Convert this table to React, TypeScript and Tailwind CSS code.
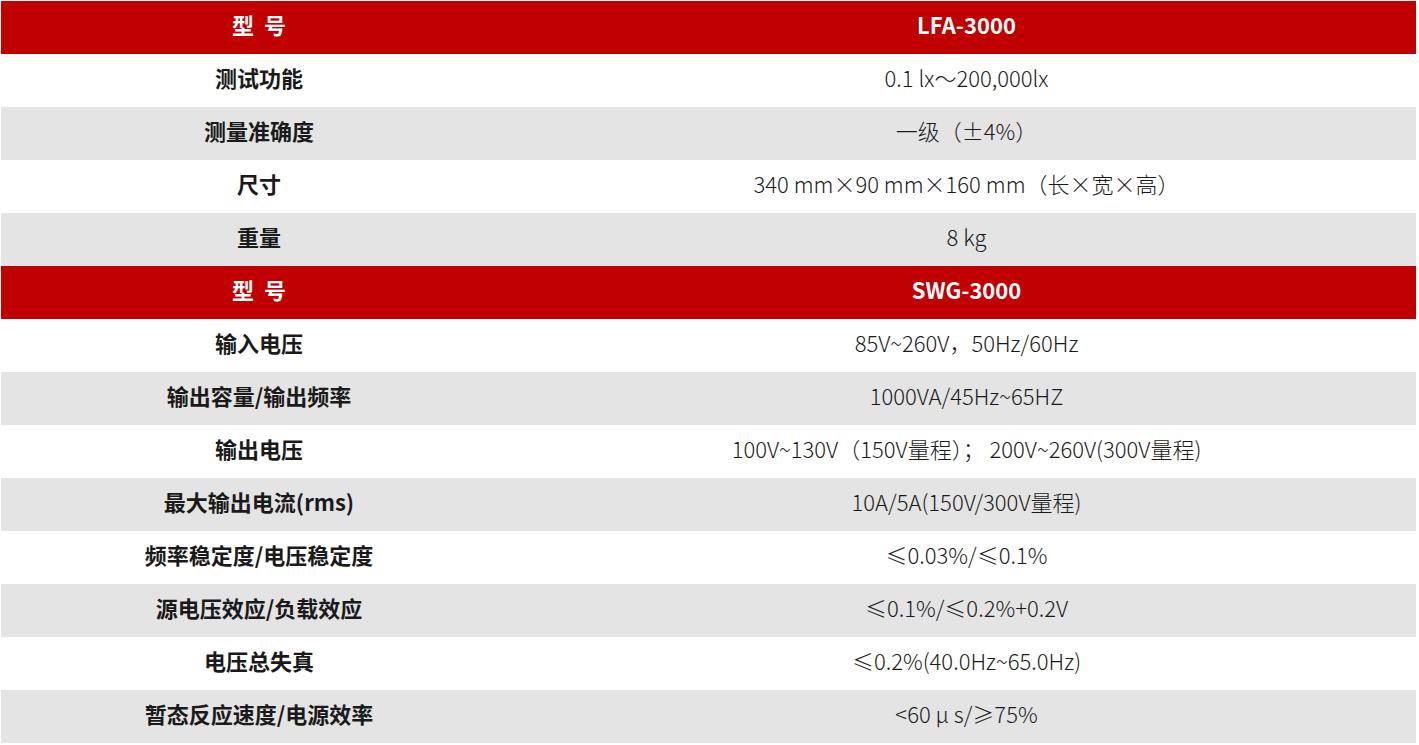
const rows: { label: string; value: string; head?: boolean }[] = [
  { label: '型\u00a0\u00a0号', value: 'LFA-3000', head: true },
  { label: '测试功能', value: '0.1 lx～200,000lx' },
  { label: '测量准确度', value: '一级（±4%）' },
  { label: '尺寸', value: '340 mm×90 mm×160 mm（长×宽×高）' },
  { label: '重量', value: '8 kg' },
  { label: '型\u00a0\u00a0号', value: 'SWG-3000', head: true },
  { label: '输入电压', value: '85V~260V，50Hz/60Hz' },
  { label: '输出容量/输出频率', value: '1000VA/45Hz~65HZ' },
  { label: '输出电压', value: '100V~130V（150V量程）； 200V~260V(300V量程)' },
  { label: '最大输出电流(rms)', value: '10A/5A(150V/300V量程)' },
  { label: '频率稳定度/电压稳定度', value: '≤0.03%/≤0.1%' },
  { label: '源电压效应/负载效应', value: '≤0.1%/≤0.2%+0.2V' },
  { label: '电压总失真', value: '≤0.2%(40.0Hz~65.0Hz)' },
  { label: '暂态反应速度/电源效率', value: '<60 μ s/≥75%' },
]

export default function App() {
  let band = 0
  return (
    <div className="min-h-[745px] bg-white pl-[1px] pt-[1px] font-['Noto_Sans_CJK_SC',sans-serif]">
      <div className="w-[1415px]">
        {rows.map((row, i) => {
          if (row.head) band = 0
          else band++
          const bg = row.head ? 'bg-[#c00000] text-white' : band % 2 === 0 ? 'bg-[#e4e4e4] text-[#1a1a1a]' : 'bg-white text-[#1a1a1a]'
          return (
            <div key={i} className={`flex h-[53px] items-center pb-[7px] text-[22px] leading-none ${bg}`}>
              <div className="w-[516px] text-center font-bold">{row.label}</div>
              <div className={`flex-1 text-center ${row.head ? 'font-bold' : 'font-light'}`}>{row.value}</div>
            </div>
          )
        })}
      </div>
    </div>
  )
}
